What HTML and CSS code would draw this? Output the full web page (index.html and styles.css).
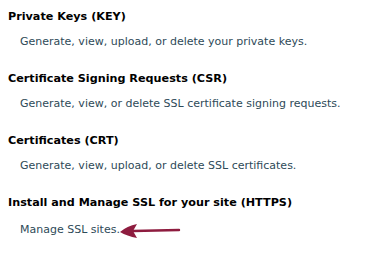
FILE: index.html
```html
<!DOCTYPE html>
<html>
<head>
<meta charset="utf-8">
<link rel="stylesheet" href="styles.css">
</head>
<body>
<div class="list">
  <section class="item">
    <h3 class="title">Private Keys (KEY)</h3>
    <p class="desc">Generate, view, upload, or delete your private keys.</p>
  </section>
  <section class="item">
    <h3 class="title">Certificate Signing Requests (CSR)</h3>
    <p class="desc">Generate, view, or delete SSL certificate signing requests.</p>
  </section>
  <section class="item">
    <h3 class="title">Certificates (CRT)</h3>
    <p class="desc">Generate, view, upload, or delete SSL certificates.</p>
  </section>
  <section class="item">
    <h3 class="title">Install and Manage SSL for your site (HTTPS)</h3>
    <p class="desc">Manage SSL sites.<svg class="arrow" width="62" height="16" viewBox="0 0 62 16"><path d="M14 8 L60 7" stroke="#8e1c3f" stroke-width="2.4" stroke-linecap="round" fill="none"/><path d="M1 9 Q8 3 18 1 L14 8 L18 15 Q8 13 1 9 Z" fill="#8e1c3f"/></svg></p>
  </section>
</div>
</body>
</html>
```
FILE: styles.css
```css
html, body {
  margin: 0;
  padding: 0;
  background: #ffffff;
}
body {
  font-family: "DejaVu Sans", Verdana, sans-serif;
}
.list {
  display: flex;
  flex-direction: column;
  gap: 22px;
  padding: 9px 0 0 8px;
}
.item {
  display: flex;
  flex-direction: column;
  gap: 10px;
}
.title {
  margin: 0;
  font-size: 11.2px;
  font-weight: bold;
  color: #000000;
  line-height: 15px;
}
.desc {
  margin: 0;
  padding-left: 12px;
  font-size: 11px;
  color: #2e4a58;
  line-height: 15px;
  display: flex;
  align-items: center;
}
.arrow {
  display: block;
  margin-left: -1px;
  margin-top: 3px;
}
```
